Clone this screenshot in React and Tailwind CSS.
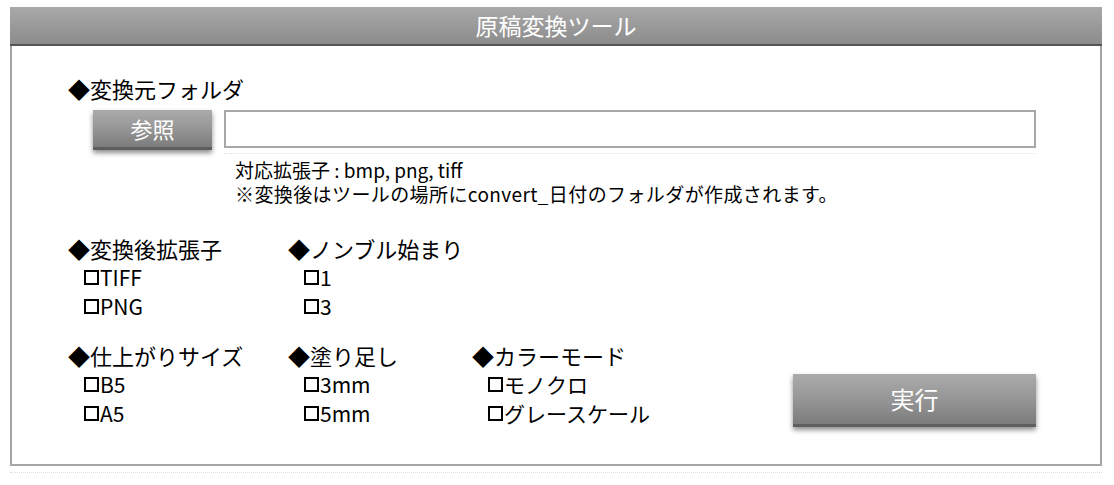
import React from 'react';

const font = { fontFamily: '"Noto Sans CJK JP", "Noto Sans", sans-serif' };

const Section = ({ title, items, width }) => (
    <div className={width}>
        <div className="text-[22px] leading-[28px] text-black whitespace-nowrap">◆{title}</div>
        <ul className="pl-[16px]">
            {items.map((it) => (
                <li key={it} className="flex items-center h-[29px] text-[21px] leading-[26px] text-black whitespace-nowrap">
                    <span className="shrink-0 w-[15px] h-[15px] border-2 border-black mr-[1px] mt-[1px]" />
                    {it}
                </li>
            ))}
        </ul>
    </div>
);

const GrayButton = ({ label, className }) => (
    <button
        className={`bg-gradient-to-b from-[#ababab] via-[#969696] to-[#7c7c7c] border-b-[3px] border-[#5e5e5e] text-white shadow-[0_3px_5px_rgba(0,0,0,0.45)] ${className}`}
    >
        {label}
    </button>
);

export default function App() {
    return (
        <div className="w-[1114px] h-[485px] bg-white pt-[7px] pl-[10px] pr-[12px]" style={font}>
            <div className="h-[39px] bg-gradient-to-b from-[#a9a9a9] to-[#8c8c8c] border-b-[2px] border-[#555] flex items-center justify-center text-white text-[23px]">
                原稿変換ツール
            </div>
            <div className="h-[420px] border-2 border-t-0 border-[#a6a6a6] pt-[28px] pl-[56px] pr-[64px]">
                <div className="text-[22px] leading-[28px] text-black">◆変換元フォルダ</div>
                <div className="flex items-start gap-[12px] pl-[25px] mt-[8px]">
                    <GrayButton label="参照" className="w-[119px] h-[40px] text-[22px]" />
                    <div className="flex-1">
                        <div className="h-[38px] border-2 border-[#a8a8a8] bg-white" />
                        <div className="border-t border-dotted border-[#e0e0e0] mt-[5px] pl-[11px] pt-[4px] text-[19px] leading-[24px] text-black whitespace-nowrap">
                            <div>対応拡張子 : bmp, png, tiff</div>
                            <div className="tracking-[0.4px]">※変換後はツールの場所にconvert_日付のフォルダが作成されます。</div>
                        </div>
                    </div>
                </div>
                <div className="flex mt-[28px]">
                    <Section title="変換後拡張子" items={['TIFF', 'PNG']} width="w-[220px]" />
                    <Section title="ノンブル始まり" items={['1', '3']} width="w-[184px]" />
                </div>
                <div className="flex mt-[21px] items-start">
                    <Section title="仕上がりサイズ" items={['B5', 'A5']} width="w-[220px]" />
                    <Section title="塗り足し" items={['3mm', '5mm']} width="w-[184px]" />
                    <Section title="カラーモード" items={['モノクロ', 'グレースケール']} width="flex-1" />
                    <GrayButton label="実行" className="w-[243px] h-[53px] text-[24px] mt-[33px]" />
                </div>
            </div>
            <div className="mt-[6px] border-t border-dotted border-[#dcdcdc]" />
        </div>
    );
}
